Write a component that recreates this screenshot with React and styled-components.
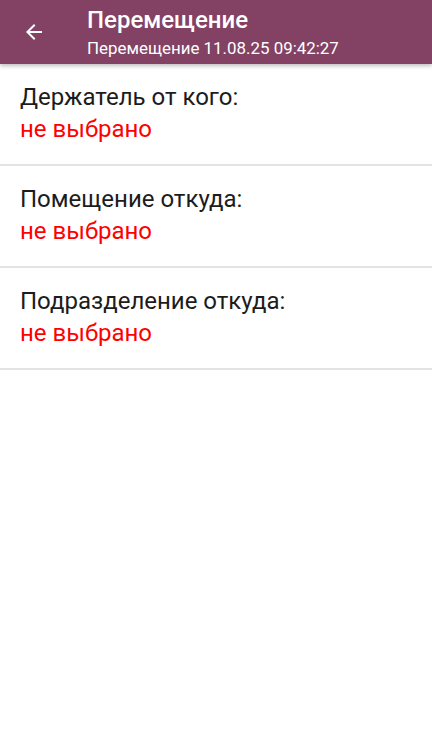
import React from 'react';
import styled, { createGlobalStyle } from 'styled-components';

const GlobalStyle = createGlobalStyle`
  body {
    margin: 0;
    background: #ffffff;
    font-family: Roboto, 'Noto Sans', sans-serif;
  }
`;

const Page = styled.div`
  width: 432px;
  min-height: 737px;
  background: #ffffff;
  display: flex;
  flex-direction: column;
`;

const Toolbar = styled.div`
  height: 64px;
  background: #834264;
  display: flex;
  align-items: center;
  box-shadow: 0 2px 4px rgba(0, 0, 0, 0.25);
  position: relative;
  z-index: 1;
`;

const BackButton = styled.div`
  width: 68px;
  height: 64px;
  display: flex;
  align-items: center;
  padding-left: 22px;
  box-sizing: border-box;
  color: #ffffff;
`;

const TitleBox = styled.div`
  align-self: flex-start;
  display: flex;
  flex-direction: column;
  padding-left: 19px;
  padding-top: 6px;
`;

const Title = styled.div`
  font-size: 24px;
  font-weight: 500;
  color: #ffffff;
  line-height: 28px;
`;

const Subtitle = styled.div`
  font-size: 16.9px;
  color: #ffffff;
  line-height: 20px;
  margin-top: 4px;
`;

const Row = styled.div`
  padding: 17px 20px 19px;
  border-bottom: 2px solid #e3e3e3;
  &:first-of-type {
    padding-top: 18px;
  }
`;

const Label = styled.div`
  font-size: 24px;
  line-height: 32px;
  color: #1c1c1c;
`;

const Value = styled.div`
  font-size: 24px;
  line-height: 32px;
  color: #ff0000;
`;

const fields = ['Держатель от кого:', 'Помещение откуда:', 'Подразделение откуда:'];

function App() {
  return (
    <Page>
      <GlobalStyle />
      <Toolbar>
        <BackButton>
          <svg width="24" height="24" viewBox="0 0 24 24">
            <path
              d="M20 11H7.83l5.59-5.59L12 4l-8 8 8 8 1.41-1.41L7.83 13H20v-2z"
              fill="#ffffff"
            />
          </svg>
        </BackButton>
        <TitleBox>
          <Title>Перемещение</Title>
          <Subtitle>Перемещение 11.08.25 09:42:27</Subtitle>
        </TitleBox>
      </Toolbar>
      {fields.map((f) => (
        <Row key={f}>
          <Label>{f}</Label>
          <Value>не выбрано</Value>
        </Row>
      ))}
    </Page>
  );
}

export default App;
